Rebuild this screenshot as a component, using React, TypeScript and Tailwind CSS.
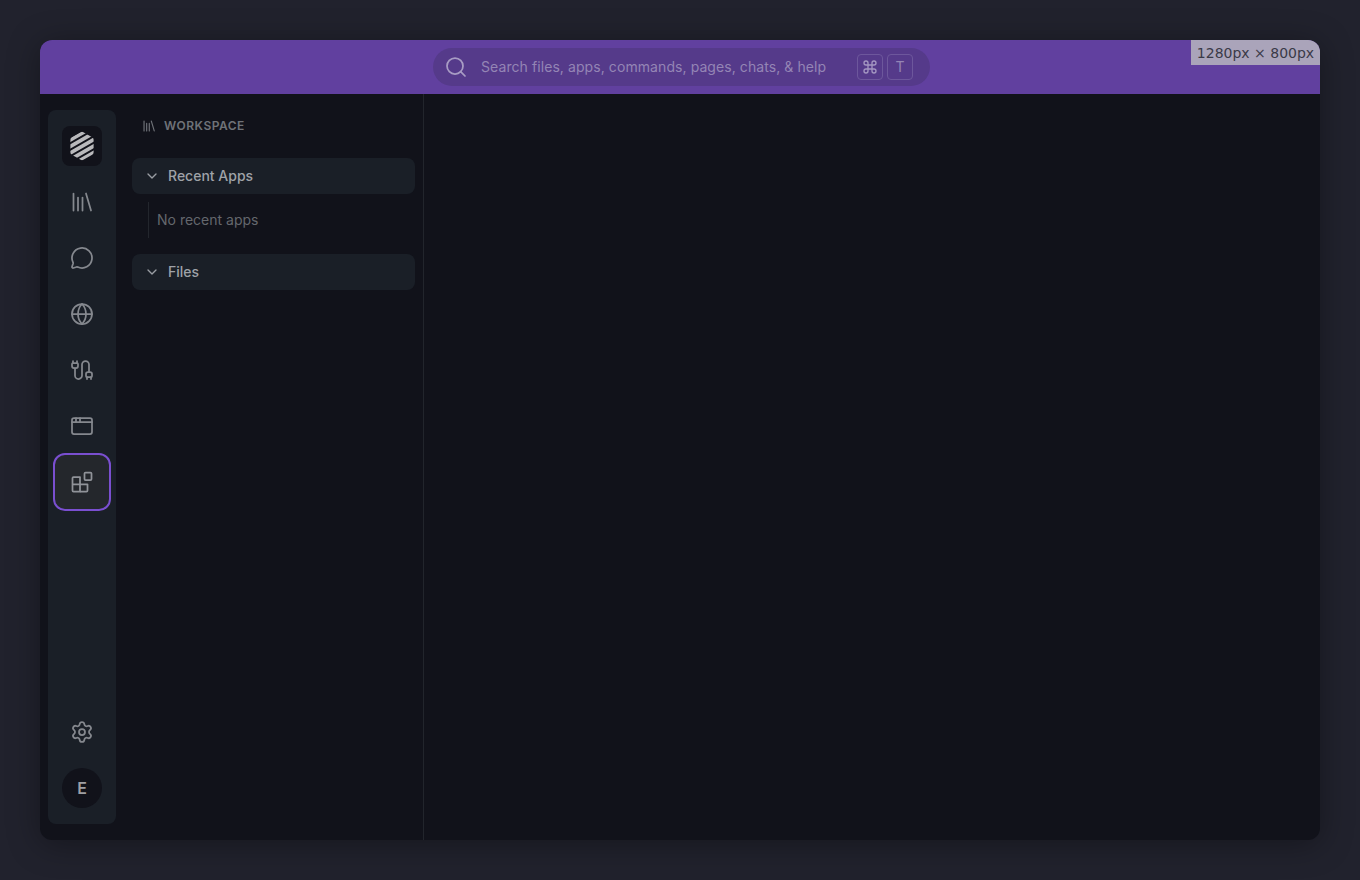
import { AppWindow, Cable, ChevronDown, Command, Globe, MessageCircle, Search, Settings } from 'lucide-react';
import type { ReactNode } from 'react';

const FONT = 'font-["Inter","Liberation_Sans",sans-serif]';

function LibraryIcon({ className, strokeWidth = 1.75 }: { className?: string; strokeWidth?: number }) {
  return (
    <svg viewBox="0 0 24 24" fill="none" stroke="currentColor" strokeWidth={strokeWidth} strokeLinecap="round" className={className}>
      <path d="M3.500 3.500v17M8 7.500v13M12.500 7.500v13M16 3.500l5 17" />
    </svg>
  );
}

function AppsIcon() {
  return (
    <svg viewBox="0 0 24 24" width="24" height="24" fill="none" stroke="currentColor" strokeWidth="1.75" strokeLinejoin="round">
      <rect x="14.500" y="2.500" width="7" height="7.500" rx="1" />
      <path d="M3.500 7H10v14.500H3.500a1 1 0 0 1-1-1V8a1 1 0 0 1 1-1Z" />
      <path d="M2.500 14.300h15v6.200a1 1 0 0 1-1 1H10" />
    </svg>
  );
}

function Logo() {
  return (
    <svg viewBox="0 0 28 32" width="26" height="30">
      <defs>
        <clipPath id="hex">
          <path d="M12.500 1.200a3 3 0 0 1 3 0l9.500 5.500a3 3 0 0 1 1.500 2.600v13.400a3 3 0 0 1-1.500 2.600l-9.500 5.500a3 3 0 0 1-3 0L3 25.300a3 3 0 0 1-1.500-2.600V9.300A3 3 0 0 1 3 6.700Z" />
        </clipPath>
      </defs>
      <g clipPath="url(#hex)" stroke="#b9b9bc" strokeWidth="4">
        <path d="M-2 11.500 30 -7M-2 18.500 30 0M-2 25.500 30 7M-2 32.500 30 14M-2 39.500 30 21" />
      </g>
    </svg>
  );
}

function RailButton({ children }: { children: ReactNode }) {
  return <div className="flex h-14 w-14 items-center justify-center text-[#85888e]">{children}</div>;
}

function Section({ title }: { title: string }) {
  return (
    <div className="flex h-9 items-center gap-2 rounded-lg bg-[#1a1f27] pl-3 text-sm font-medium text-[#9fa2a8]">
      <ChevronDown size={16} strokeWidth={2} className="text-[#9a9da3]" />
      <span>{title}</span>
    </div>
  );
}

export default function App() {
  return (
    <div className={`relative flex h-[880px] w-[1360px] items-center justify-center overflow-hidden bg-[#21222d] ${FONT}`}>
      <div className="relative flex h-[800px] w-[1280px] flex-col overflow-hidden rounded-xl bg-[#11121a] shadow-[0_4px_32px_rgba(0,0,0,0.35)]">
        <header className="flex h-[54px] shrink-0 items-center justify-center bg-[#61409f] pl-[3px]">
          <div className="flex h-[38px] w-[497px] items-center rounded-full bg-[#553a8a] pl-[11px] pr-[17px]">
            <Search size={24} strokeWidth={1.75} className="text-[#a89cc4]" />
            <span className="ml-[13px] text-sm tracking-[0.08px] text-[#9485b5]">
              Search files, apps, commands, pages, chats, &amp; help
            </span>
            <div className="ml-auto flex gap-1">
              <kbd className="flex h-[26px] w-[26px] items-center justify-center rounded border border-[#6d579c] text-[#a497c2]">
                <Command size={16} strokeWidth={2} />
              </kbd>
              <kbd className={`flex h-[26px] w-[26px] items-center justify-center rounded border border-[#6d579c] text-sm font-normal text-[#9485b5] ${FONT}`}>
                T
              </kbd>
            </div>
          </div>
        </header>

        <div className="flex min-h-0 flex-1">
          <aside className="ml-2 mt-4 mb-4 flex w-[68px] shrink-0 flex-col items-center rounded-lg bg-[#1a1f27] pt-2">
            <RailButton>
              <div className="flex h-10 w-10 items-center justify-center rounded-lg bg-[#11121a]">
                <Logo />
              </div>
            </RailButton>
            <RailButton>
              <LibraryIcon className="h-6 w-6" />
            </RailButton>
            <RailButton>
              <MessageCircle size={24} strokeWidth={1.75} />
            </RailButton>
            <RailButton>
              <Globe size={24} strokeWidth={1.75} />
            </RailButton>
            <RailButton>
              <Cable size={24} strokeWidth={1.75} />
            </RailButton>
            <RailButton>
              <AppWindow size={24} strokeWidth={1.75} />
            </RailButton>
            <div className="-my-px flex h-[58px] w-[58px] items-center justify-center rounded-xl border-2 border-[#7a4fd0] bg-[#24272c] text-[#909399]">
              <AppsIcon />
            </div>
            <div className="mt-auto mb-2 flex flex-col items-center">
              <RailButton>
                <Settings size={24} strokeWidth={1.75} />
              </RailButton>
              <RailButton>
                <div className="flex h-10 w-10 items-center justify-center rounded-full bg-[#11121a] text-base font-semibold text-[#9f9fa3]">
                  E
                </div>
              </RailButton>
            </div>
          </aside>

          <nav className="w-[308px] shrink-0 border-r border-[#22252c] pl-4 pr-2">
            <div className="flex h-[64px] items-center gap-2 pl-2.5">
              <LibraryIcon className="h-3.5 w-3.5 text-[#6f7278]" strokeWidth={2} />
              <span className="text-xs font-semibold tracking-[0.5px] text-[#6f7278]">WORKSPACE</span>
            </div>
            <Section title="Recent Apps" />
            <div className="ml-4 mt-2 mb-4 flex h-9 items-center border-l border-[#23262d] pl-2 text-sm text-[#64676d]">
              No recent apps
            </div>
            <Section title="Files" />
          </nav>

          <main className="flex-1" />
        </div>

        <div className='absolute right-0 top-0 flex h-[25px] w-[129px] items-center justify-center bg-[#aaa4ba] pt-px font-["DejaVu_Sans",sans-serif] text-sm text-[#3a3a48]'>
          1280px × 800px
        </div>
      </div>
    </div>
  );
}
